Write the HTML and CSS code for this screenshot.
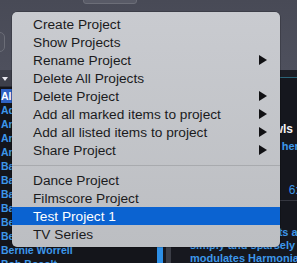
FILE: index.html
```html
<!DOCTYPE html>
<html lang="en">
<head>
    <meta charset="UTF-8">
    <meta name="viewport" content="width=device-width, initial-scale=1.0">
    <title>Projects</title>
    <link rel="stylesheet" href="styles.css">
</head>
<body>
    <div class="window">
        <div class="toolbar">
            <div class="search"></div>
            <div class="tb-button"></div>
        </div>

        <div class="main">
            <div class="sidebar">
                <div class="list-head"><span class="caret"></span></div>
                <ul class="list">
                    <li class="selected">All</li>
                    <li>Adrian Belew</li>
                    <li>Andy Summers</li>
                    <li>Annie Clark</li>
                    <li>Anthony Jackson</li>
                    <li>Bad Plus</li>
                    <li>Barry Adamson</li>
                    <li>Bass Desires</li>
                    <li>Bauhaus</li>
                    <li>Beck</li>
                    <li>Belew Trio</li>
                    <li>Bernie Worrell</li>
                    <li>Bob Bocolt</li>
                </ul>
            </div>

            <div class="meters">
                <div class="meter blue"></div>
                <div class="meter grey"></div>
            </div>

            <div class="detail">
                <div class="detail-top"></div>
                <div class="title">Bootsy Growls</div>
                <div class="link">Click here</div>
                <div class="time">6:42</div>
                <div class="rule"></div>
                <div class="notes">
                    <div class="line right">His clavinet parts are</div>
                    <div class="line">simply and sparsely</div>
                    <div class="line">modulates Harmonia</div>
                </div>
            </div>
        </div>
    </div>

    <!-- context menu -->
    <div class="menu">
        <div class="item">Create Project</div>
        <div class="item">Show Projects</div>
        <div class="item">Rename Project <span class="arrow"></span></div>
        <div class="item">Delete All Projects</div>
        <div class="item">Delete Project <span class="arrow"></span></div>
        <div class="item">Add all marked items to project <span class="arrow"></span></div>
        <div class="item">Add all listed items to project <span class="arrow"></span></div>
        <div class="item">Share Project <span class="arrow"></span></div>
        <div class="separator"></div>
        <div class="item">Dance Project</div>
        <div class="item">Filmscore Project</div>
        <div class="item active">Test Project 1</div>
        <div class="item">TV Series</div>
    </div>
</body>
</html>
```

FILE: styles.css
```css
body {
    margin: 0;
    width: 297px;
    height: 263px;
    overflow: hidden;
    background-color: #15161d;
    font-family: 'Liberation Sans', Arial, sans-serif;
}

.window {
    display: flex;
    flex-direction: column;
    height: 263px;
}

/* toolbar */

.toolbar {
    display: flex;
    align-items: flex-start;
    height: 70px;
    flex-shrink: 0;
    background: linear-gradient(#484a56, #4e505d);
}

.search {
    width: 43px;
    height: 18px;
    margin-left: -40px;
    margin-top: 32px;
    border: 1px solid #6b6d77;
    border-radius: 5px;
    background-color: #4f515d;
}

.tb-button {
    width: 52px;
    height: 20px;
    margin-left: 78px;
    margin-top: -18px;
    border: 1px solid #6c6e78;
    border-radius: 3px;
    background-color: #585a66;
}

/* main area */

.main {
    display: flex;
    flex: 1;
    min-height: 0;
}

.sidebar {
    width: 157px;
    flex-shrink: 0;
    background-color: #14151b;
}

.list-head {
    height: 16px;
    background-color: #3d3f4a;
    border-bottom: 1px solid #2a2c34;
    position: relative;
}

.caret {
    position: absolute;
    left: 2px;
    top: 7px;
    border-left: 3px solid transparent;
    border-right: 3px solid transparent;
    border-top: 4px solid #e8e8ee;
}

.list {
    list-style: none;
    margin: 0;
    padding: 2px 0 0 1px;
}

.list li {
    height: 14px;
    line-height: 14px;
    font-size: 10.5px;
    font-weight: bold;
    color: #3d97ea;
    white-space: nowrap;
}

.list li.selected {
    color: #ffffff;
    background-color: #2f62c4;
}

.meters {
    display: flex;
    width: 33px;
    flex-shrink: 0;
    padding-top: 17px;
    background-color: #17181f;
}

.meter {
    height: 100%;
}

.meter.blue {
    width: 6px;
    background-color: #2d8fe6;
}

.meter.grey {
    width: 5px;
    margin-left: 3px;
    background-color: #3b3d46;
}

.detail {
    flex: 1;
    min-width: 0;
    background-color: #15171e;
    font-size: 11px;
    font-weight: bold;
    color: #3d97ea;
}

.detail-top {
    height: 7px;
    background-color: #1c1e26;
    border-bottom: 1px solid #2b6478;
}

.title {
    margin-top: 43px;
    line-height: 16px;
    font-size: 12px;
    color: #f2f2f5;
    text-align: right;
    padding-right: 4px;
    white-space: nowrap;
}

.link {
    margin-top: 1px;
    margin-right: -8px;
    line-height: 16px;
    text-align: right;
    white-space: nowrap;
}

.time {
    margin-top: 28px;
    margin-right: -15px;
    line-height: 16px;
    font-size: 12px;
    font-weight: normal;
    text-align: right;
    white-space: nowrap;
}

.rule {
    height: 1px;
    margin-top: 2px;
    background-color: #34363f;
}

.notes {
    margin-top: 25px;
}

.line {
    line-height: 13px;
    white-space: nowrap;
}

.line.right {
    text-align: right;
    margin-right: -11px;
}

/* context menu */

.menu {
    position: absolute;
    left: 12px;
    top: 12px;
    width: 268px;
    padding: 3px 0 4px;
    border-radius: 5px;
    background: linear-gradient(#c9cbd0, #bcbec2);
    box-shadow: 0 0 0 0.5px rgba(0, 0, 0, 0.35);
    font-family: 'Liberation Sans', Arial, sans-serif;
    font-size: 13.7px;
    color: #1b1b1d;
}

.item {
    display: flex;
    align-items: center;
    justify-content: space-between;
    height: 18px;
    padding: 0 13px 0 21px;
    white-space: nowrap;
}

.item.active {
    background-color: #0b63d1;
    color: #ffffff;
}

.arrow {
    width: 0;
    height: 0;
    border-top: 5px solid transparent;
    border-bottom: 5px solid transparent;
    border-left: 8px solid #111114;
}

.separator {
    height: 1px;
    margin: 6px 0 5px;
    background-color: #a8aaae;
}
```
